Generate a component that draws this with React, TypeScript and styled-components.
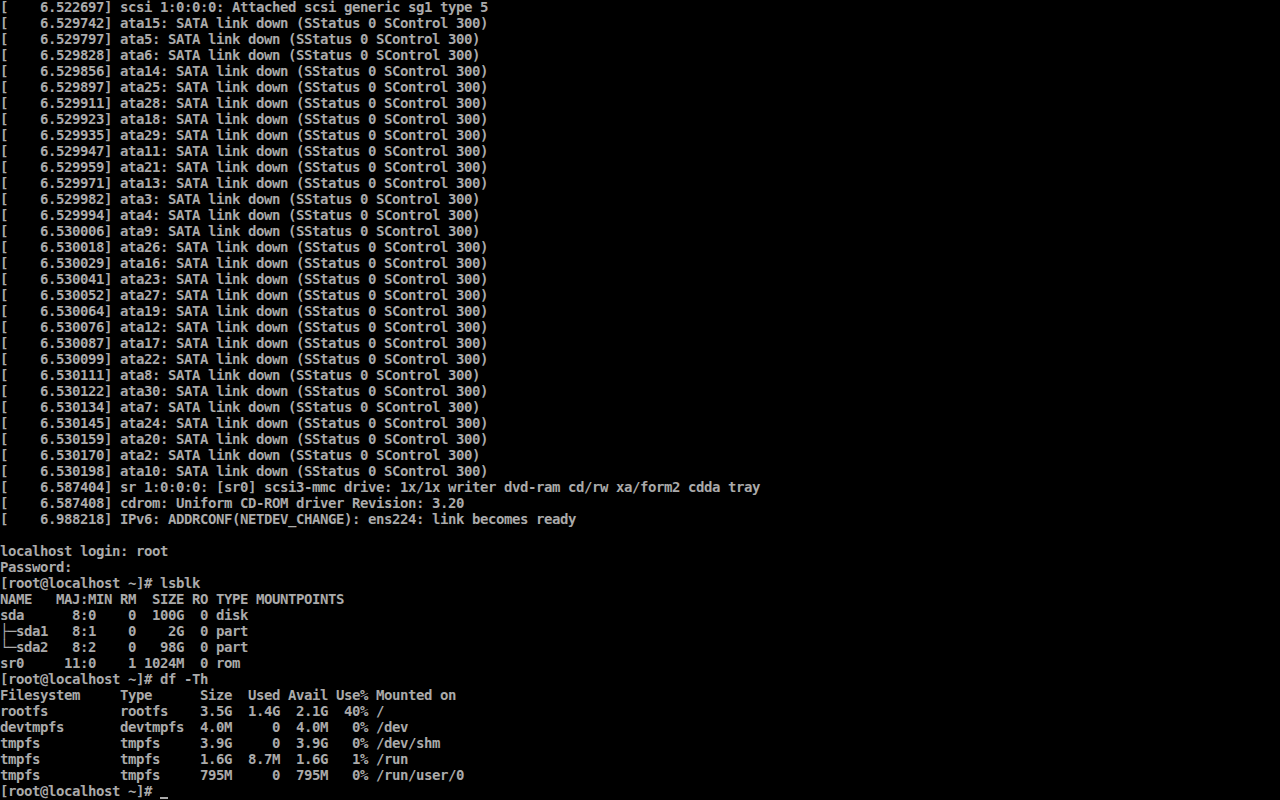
import React from 'react';
import styled, { createGlobalStyle } from 'styled-components';

const GlobalStyle = createGlobalStyle`
  html, body {
    margin: 0;
    padding: 0;
    background: #000;
  }
`;

const ataLines: [string, string][] = [
  ['6.529742', 'ata15'],
  ['6.529797', 'ata5'],
  ['6.529828', 'ata6'],
  ['6.529856', 'ata14'],
  ['6.529897', 'ata25'],
  ['6.529911', 'ata28'],
  ['6.529923', 'ata18'],
  ['6.529935', 'ata29'],
  ['6.529947', 'ata11'],
  ['6.529959', 'ata21'],
  ['6.529971', 'ata13'],
  ['6.529982', 'ata3'],
  ['6.529994', 'ata4'],
  ['6.530006', 'ata9'],
  ['6.530018', 'ata26'],
  ['6.530029', 'ata16'],
  ['6.530041', 'ata23'],
  ['6.530052', 'ata27'],
  ['6.530064', 'ata19'],
  ['6.530076', 'ata12'],
  ['6.530087', 'ata17'],
  ['6.530099', 'ata22'],
  ['6.530111', 'ata8'],
  ['6.530122', 'ata30'],
  ['6.530134', 'ata7'],
  ['6.530145', 'ata24'],
  ['6.530159', 'ata20'],
  ['6.530170', 'ata2'],
  ['6.530198', 'ata10'],
];

const lines: string[] = [
  '[    6.522697] scsi 1:0:0:0: Attached scsi generic sg1 type 5',
  ...ataLines.map(
    ([ts, dev]) => `[    ${ts}] ${dev}: SATA link down (SStatus 0 SControl 300)`
  ),
  '[    6.587404] sr 1:0:0:0: [sr0] scsi3-mmc drive: 1x/1x writer dvd-ram cd/rw xa/form2 cdda tray',
  '[    6.587408] cdrom: Uniform CD-ROM driver Revision: 3.20',
  '[    6.988218] IPv6: ADDRCONF(NETDEV_CHANGE): ens224: link becomes ready',
  '',
  'localhost login: root',
  'Password:',
  '[root@localhost ~]# lsblk',
  'NAME   MAJ:MIN RM  SIZE RO TYPE MOUNTPOINTS',
  'sda      8:0    0  100G  0 disk',
  '├─sda1   8:1    0    2G  0 part',
  '└─sda2   8:2    0   98G  0 part',
  'sr0     11:0    1 1024M  0 rom',
  '[root@localhost ~]# df -Th',
  'Filesystem     Type      Size  Used Avail Use% Mounted on',
  'rootfs         rootfs    3.5G  1.4G  2.1G  40% /',
  'devtmpfs       devtmpfs  4.0M     0  4.0M   0% /dev',
  'tmpfs          tmpfs     3.9G     0  3.9G   0% /dev/shm',
  'tmpfs          tmpfs     1.6G  8.7M  1.6G   1% /run',
  'tmpfs          tmpfs     795M     0  795M   0% /run/user/0',
];

const App = () => {
  return (
    <>
      <GlobalStyle />
      <Screen>
        {lines.map((text, i) => (
          <Line key={i}>{text}</Line>
        ))}
        <Line>
          {'[root@localhost ~]# '}
          <Cursor />
        </Line>
      </Screen>
    </>
  );
};

const Screen = styled.div`
  width: 1280px;
  height: 800px;
  overflow: hidden;
  background: #000;
  color: #aaaaaa;
  font-family: 'DejaVu Sans Mono', 'Liberation Mono', monospace;
  font-size: 14px;
  letter-spacing: -0.4287px;
  font-weight: bold;
`;

const Line = styled.div`
  height: 16px;
  line-height: 14px;
  padding-bottom: 2px;
  box-sizing: border-box;
  white-space: pre;
`;

const Cursor = styled.span`
  display: inline-block;
  width: 8px;
  height: 16px;
  vertical-align: top;
  background: linear-gradient(
    to bottom,
    transparent 13px,
    #aaaaaa 13px,
    #aaaaaa 15px,
    transparent 15px
  );
`;

export default App;
